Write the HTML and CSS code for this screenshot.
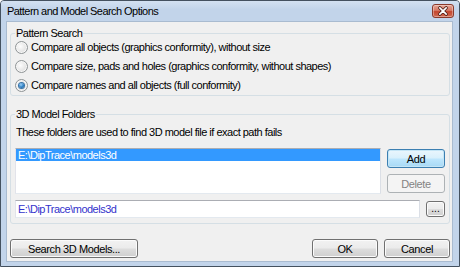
FILE: index.html
```html
<!DOCTYPE html>
<html lang="en">
<head>
    <meta charset="UTF-8">
    <title>Pattern and Model Search Options</title>
    <link rel="stylesheet" href="styles.css">
</head>
<body>

    <div class="window">
        <div class="titlebar">
            <span class="title">Pattern and Model Search Options</span>
            <button class="close" title="Close">
                <svg width="22" height="14" viewBox="0 0 22 14">
                    <path d="M7.5 3.5 L14.5 10.5 M14.5 3.5 L7.5 10.5" stroke="#4a1d16" stroke-width="3.6" stroke-linecap="round"/>
                    <path d="M7.5 3.5 L14.5 10.5 M14.5 3.5 L7.5 10.5" stroke="#ffffff" stroke-width="1.8" stroke-linecap="round"/>
                </svg>
            </button>
        </div>

        <div class="client">
            <fieldset class="group group-pattern">
                <legend>Pattern Search</legend>
                <div class="options">
                    <label class="option"><span class="radio"></span>Compare all objects (graphics conformity), without size</label>
                    <label class="option"><span class="radio"></span>Compare size, pads and holes (graphics conformity, without shapes)</label>
                    <label class="option"><span class="radio checked"></span>Compare names and all objects (full conformity)</label>
                </div>
            </fieldset>

            <fieldset class="group group-folders">
                <legend>3D Model Folders</legend>
                <p class="hint">These folders are used to find 3D model file if exact path fails</p>

                <div class="list-row">
                    <div class="listbox">
                        <div class="list-item selected">E:\DipTrace\models3d</div>
                    </div>
                    <div class="side-buttons">
                        <button class="btn btn-focus">Add</button>
                        <button class="btn" disabled>Delete</button>
                    </div>
                </div>

                <div class="path-row">
                    <div class="edit">E:\DipTrace\models3d</div>
                    <button class="btn btn-browse">...</button>
                </div>
            </fieldset>

            <div class="footer">
                <button class="btn btn-search">Search 3D Models...</button>
                <div class="footer-right">
                    <button class="btn btn-dialog">OK</button>
                    <button class="btn btn-dialog">Cancel</button>
                </div>
            </div>
        </div>
    </div>

</body>
</html>
```

FILE: styles.css
```css
body {
    margin: 0;
    background: #ffffff;
    font-family: "Liberation Sans", Arial, sans-serif;
    font-size: 11px;
    letter-spacing: -0.5px;
    color: #000;
}
.window {
    width: 460px;
    height: 267px;
    box-sizing: border-box;
    border: 1px solid #44515f;
    border-radius: 4px 4px 0 0;
    background: #c2d4ea;
    padding: 0 7px 5px 6px;
    display: flex;
    flex-direction: column;
}
.titlebar {
    height: 21px;
    margin: 0 -7px 0 -6px;
    padding-left: 6px;
    display: flex;
    align-items: flex-start;
    justify-content: space-between;
    background: linear-gradient(#d3e1f1, #c2d4ea 40%);
    border-radius: 3px 3px 0 0;
}
.title {
    line-height: 20px;
    color: #000;
    letter-spacing: -0.55px;
}
.close {
    width: 22px;
    height: 14px;
    margin: 3px 5px 0 0;
    padding: 0;
    border: 1px solid #8a3a2c;
    border-radius: 3px;
    background: linear-gradient(#e6a594, #d67a66 45%, #c4472f 55%, #cf6a52);
    box-shadow: inset 0 0 0 1px rgba(255, 255, 255, 0.35);
    display: flex;
    align-items: center;
    justify-content: center;
}
.close svg {
    display: block;
}
.client {
    flex: 1;
    background: #f0f0f0;
    box-shadow: 0 0 0 1px #a9bbd0;
    padding: 5px 2px 3px 3px;
    display: flex;
    flex-direction: column;
}

/* group boxes */
.group {
    margin: 0;
    padding: 0 4px 2px 4px;
    border: 1px solid #d5dfe5;
    border-radius: 3px;
}
.group legend {
    padding: 0 1px;
    line-height: 12px;
}
.group-folders {
    margin-top: 12px;
    padding-bottom: 5px;
}
.options {
    display: flex;
    flex-direction: column;
    gap: 3px;
}
.option {
    height: 16px;
    display: flex;
    align-items: center;
}
.radio {
    width: 11px;
    height: 11px;
    border: 1px solid #8f9496;
    border-radius: 50%;
    margin-right: 3px;
    background: radial-gradient(circle at 40% 40%, #fdfdfd 0%, #e6e6e6 55%, #cfcfcf 100%);
    box-shadow: inset 0 0 0 1px #f7f7f7;
    display: flex;
    align-items: center;
    justify-content: center;
}
.radio.checked::after {
    content: "";
    width: 5px;
    height: 5px;
    border-radius: 50%;
    background: radial-gradient(circle at 40% 35%, #9fd3fa 0%, #2d7fc4 55%, #0f4f8c 100%);
    box-shadow: 0 0 0 1px #3a73a6;
}

.hint {
    margin: 5px 0 0 1px;
    line-height: 14px;
}
.list-row {
    margin-top: 9px;
    display: flex;
    gap: 6px;
}
.listbox {
    flex: 1;
    height: 46px;
    box-sizing: border-box;
    border: 1px solid #abadb3;
    border-color: #abadb3 #dbdfe6 #e3e9ef #e2e3ea;
    background: #fff;
}
.list-item {
    height: 12px;
    line-height: 12px;
    padding-left: 2px;
}
.list-item.selected {
    background: #3399ff;
    color: #fff;
}
.side-buttons {
    width: 58px;
    padding-top: 1px;
    display: flex;
    flex-direction: column;
    gap: 6px;
}
.path-row {
    margin-top: 6px;
    display: flex;
    align-items: flex-start;
    gap: 6px;
}
.edit {
    flex: 1;
    height: 18px;
    box-sizing: border-box;
    border: 1px solid #abadb3;
    border-color: #abadb3 #dbdfe6 #e3e9ef #e2e3ea;
    background: #fff;
    color: #3333cc;
    line-height: 16px;
    padding-left: 2px;
}

/* buttons */
.btn {
    height: 19px;
    box-sizing: border-box;
    padding: 0;
    font-family: inherit;
    font-size: 11px;
    letter-spacing: -0.4px;
    color: #000;
    border: 1px solid #707070;
    border-radius: 3px;
    background: linear-gradient(#f2f2f2 0%, #ebebeb 48%, #dddddd 52%, #cfcfcf 100%);
    box-shadow: inset 0 0 0 1px #fbfbfb;
}
.btn-focus {
    border-color: #3c7fb1;
    background: linear-gradient(#eaf6fd 0%, #d9f0fc 48%, #bee6fd 52%, #a7d9f5 100%);
    box-shadow: inset 0 0 0 1px #c4e5f6;
}
.btn:disabled {
    border-color: #adb2b5;
    background: #f4f4f4;
    box-shadow: none;
    color: #838383;
}
.btn-browse {
    width: 19px;
    height: 16px;
    margin-top: 1px;
    line-height: 12px;
    font-size: 10px;
    letter-spacing: 0;
}
.footer {
    margin-top: 15px;
    display: flex;
    justify-content: space-between;
}
.btn-search {
    width: 128px;
}
.footer-right {
    display: flex;
    gap: 6px;
}
.btn-dialog {
    width: 66px;
}
```
